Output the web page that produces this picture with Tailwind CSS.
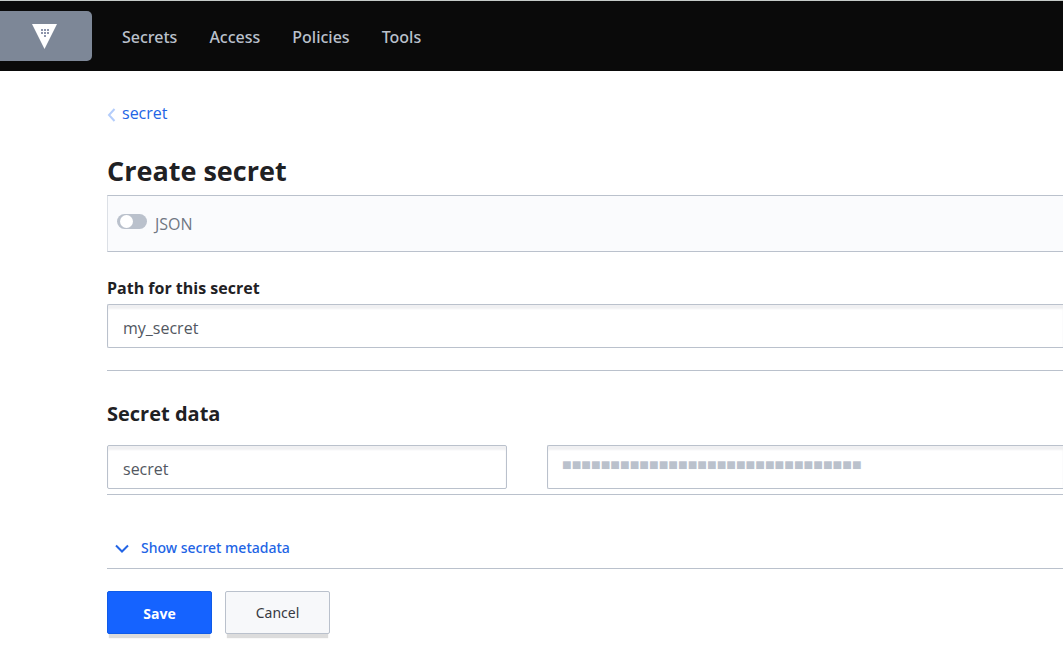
<!DOCTYPE html>
<html lang="en">
<head>
<meta charset="utf-8">
<meta name="viewport" content="width=device-width, initial-scale=1">
<title>Create secret</title>
<script src="https://cdn.jsdelivr.net/npm/@tailwindcss/browser@4"></script>
</head>
<body class="bg-white font-['Open_Sans','Noto_Sans',sans-serif] text-[16px] text-[#1f2124]">
<header class="flex items-center border-t border-[#c5cbc8] bg-[#0a0a0a] py-[10px]">
  <a href="#" aria-label="Home" class="flex h-[50px] w-[92px] items-center rounded-r-[5px] bg-[#7d8797] pl-8">
    <svg class="h-[26px] w-[26px]" viewBox="0 0 26 26" aria-hidden="true">
      <path fill="#fff" d="M0 1h25L12.500 26z"/>
      <g fill="#8d95ab"><path d="M9 6h2v2H9zM12 6h2v2h-2zM15 6h2v2h-2zM9 9h2v2H9zM12 9h2v2h-2zM15 9h2v2h-2zM12 12h2v2h-2z"/></g>
    </svg>
  </a>
  <nav class="ml-[30px] flex gap-[32px] pt-[2px] font-['Noto_Sans',sans-serif] text-[16px] leading-6 font-medium text-[#bac1cc]">
    <a href="#">Secrets</a><a href="#">Access</a><a href="#">Policies</a><a href="#">Tools</a>
  </nav>
</header>
<main class="pt-[30px] pb-6 pl-[107px]">
  <a href="#" class="flex w-fit items-center gap-[6px] leading-6 text-[#2264e5]">
    <svg class="mt-1 h-[14px] w-[9px]" viewBox="0 0 9 14" fill="none" stroke="#b4cdfb" stroke-width="2" aria-hidden="true"><path d="M7.500 1L2 7l5.500 6"/></svg>secret</a>
  <h1 class="mt-[28px] text-[27px] leading-9 font-bold">Create secret</h1>
  <form>
    <div class="mt-[6px] h-[57px] border-y border-l border-y-[#bac1cc] border-l-[#dce0e6] bg-[#fafbfd] pt-[14px] pl-[9px]">
      <label class="flex w-fit gap-2 text-[16px] leading-[28px] text-[#6f7682]">
        <input type="checkbox" class="mt-[4px] h-[15px] w-[30px] appearance-none rounded-full bg-[#bac1cc] before:mt-[1px] before:ml-[3px] before:block before:size-[13px] before:rounded-full before:bg-white checked:bg-[#1563ff] checked:before:ml-[15px]">JSON</label>
    </div>
    <label for="path" class="mt-[24px] block leading-6 font-bold">Path for this secret</label>
    <input id="path" value="my_secret" class="mt-[4px] block h-[44px] w-full rounded-l-[2px] border-y border-l border-[#bac1cc] px-[15px] pt-1 text-[#525761] [box-shadow:inset_0_4px_2px_#f0f0f2]">
    <hr class="mt-[22px] border-[#bac1cc]">
    <h2 class="mt-[28px] text-[20px] leading-[30px] font-bold">Secret data</h2>
    <div class="mt-[16px] grid grid-cols-[400px_1fr] gap-[40px] border-b border-[#bac1cc] pb-[5px]">
      <input aria-label="Key" value="secret" class="h-[44px] w-full min-w-0 rounded-[2px] border border-[#bac1cc] px-[15px] pt-1 text-[#525761] [box-shadow:inset_0_4px_2px_#f0f0f2]">
      <input aria-label="Value" value="■■■■■■■■■■■■■■■■■■■■■■■■■■■■■■■" class="h-[44px] w-full min-w-0 rounded-l-[2px] border-y border-l border-[#bac1cc] px-[14px] pb-[4px] font-['Liberation_Sans',sans-serif] text-[16px] text-[#bac1cc] [box-shadow:inset_0_4px_2px_#f0f0f2]">
    </div>
    <div class="border-b border-[#bac1cc] pt-[41px] pb-[8px] pl-2">
      <button type="button" class="flex items-center gap-3 font-['Noto_Sans',sans-serif] text-[14px] leading-6 font-medium text-[#2264e5]">
        <svg class="mt-[2px] h-[10px] w-[14px]" viewBox="0 0 14 10" fill="none" stroke="currentColor" stroke-width="2" aria-hidden="true"><path d="M1 1.500l6 6 6-6"/></svg>Show secret metadata</button>
    </div>
    <div class="mt-[22px] flex gap-[13px] text-[14px]">
      <button type="submit" class="h-[43px] w-[105px] rounded-[2px] border border-[#0f5be8] bg-[#1563ff] pt-[2px] font-bold text-white [box-shadow:0_6px_1px_-2px_#dcdcdc]">Save</button>
      <button type="button" class="h-[43px] w-[105px] rounded-[2px] border border-[#bac1cc] bg-[#f7f8fa] font-['Noto_Sans',sans-serif] text-[#373a42] [box-shadow:0_6px_1px_-2px_#dcdcdc]">Cancel</button>
    </div>
  </form>
</main>
</body>
</html>
